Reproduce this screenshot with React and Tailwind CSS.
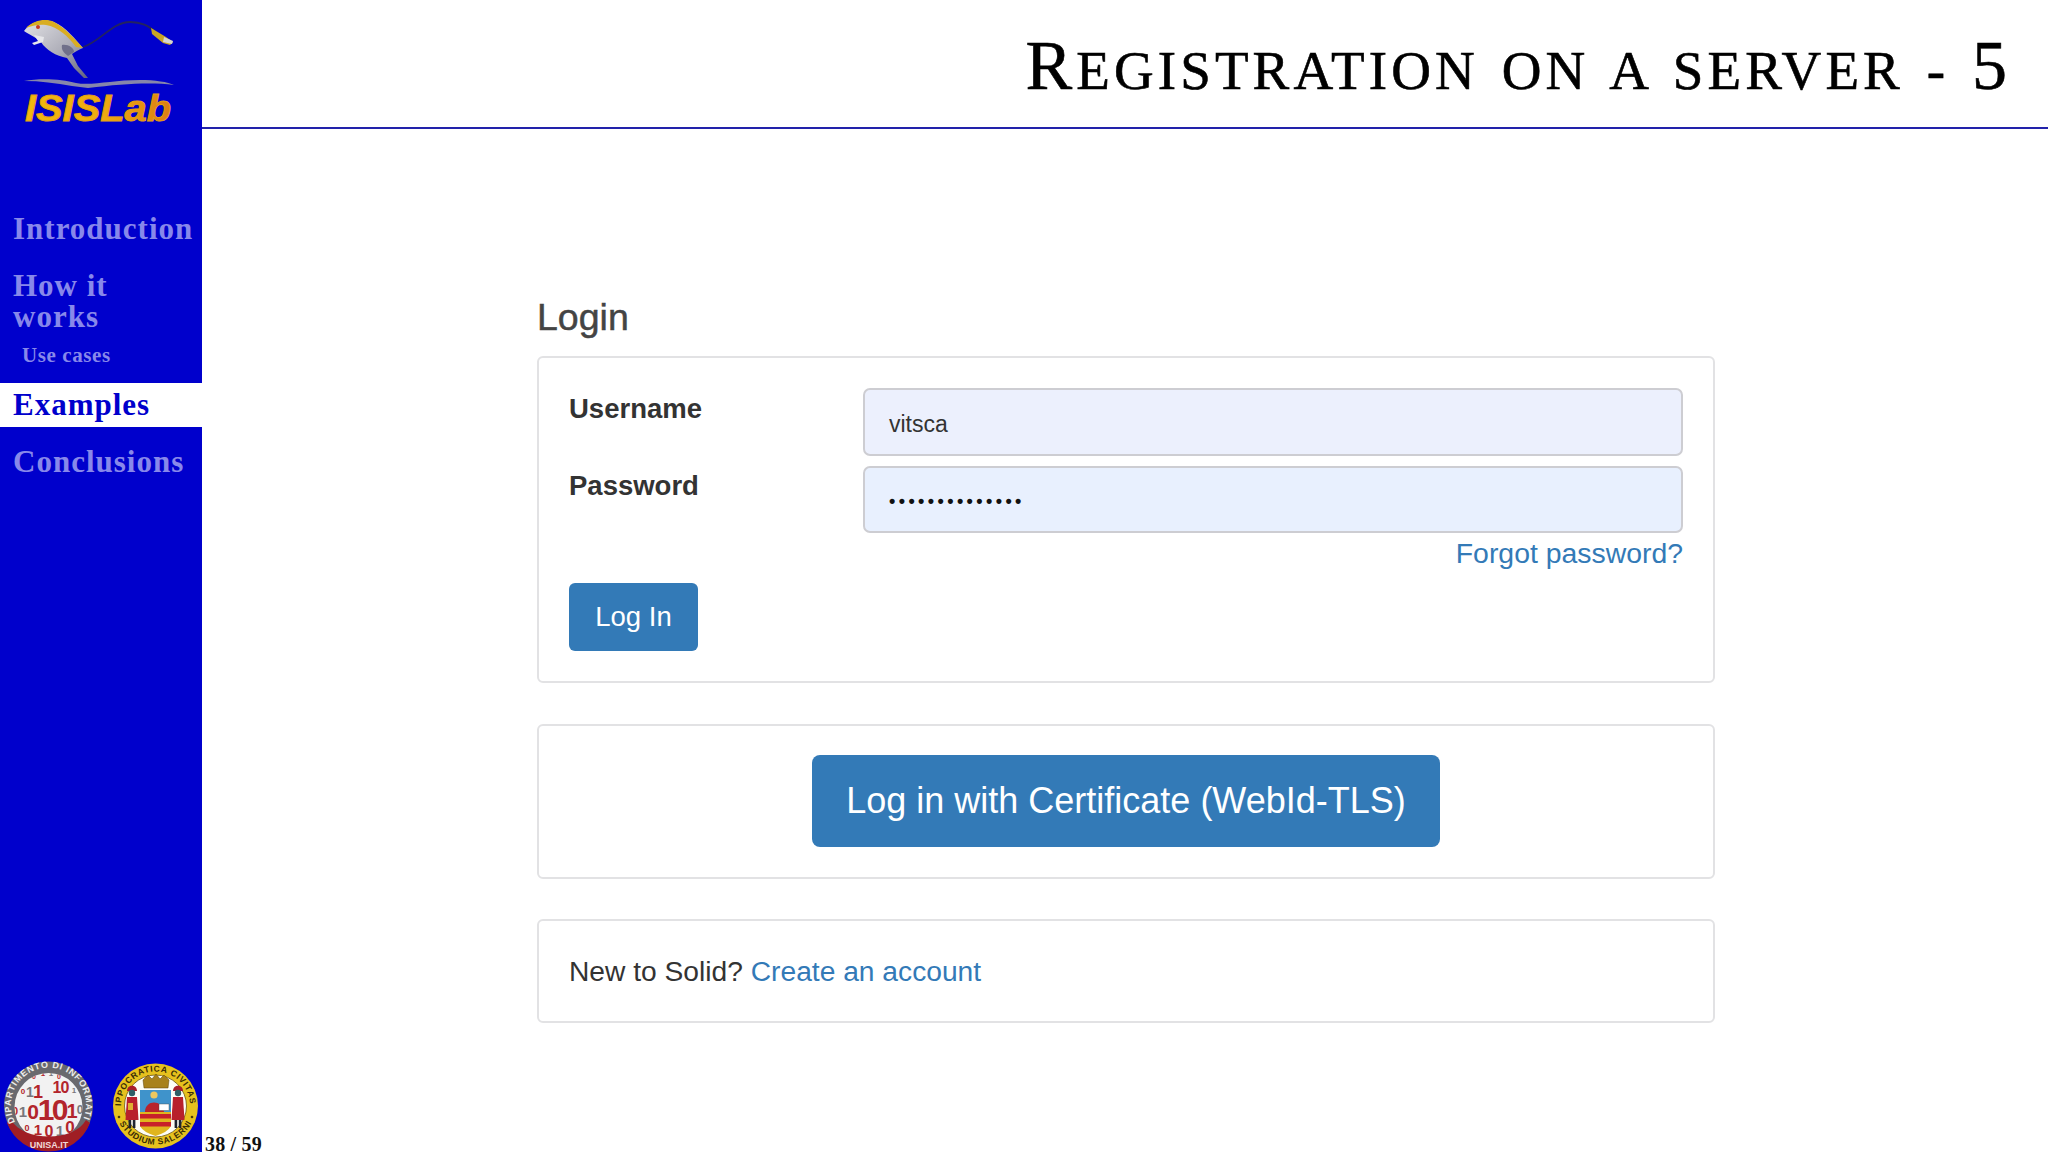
const serif = { fontFamily: '"Liberation Serif", serif' };
const sansName = '"Liberation Sans", Arial, sans-serif';

function Logo() {
  return (
    <svg viewBox="0 0 202 128" className="block w-[202px] h-[128px] shrink-0">
      <defs>
        <linearGradient id="isis" x1="0" y1="0" x2="1" y2="0">
          <stop offset="0" stopColor="#f2b90f" />
          <stop offset="0.55" stopColor="#eeaa10" />
          <stop offset="1" stopColor="#dc7d14" />
        </linearGradient>
        <linearGradient id="body" x1="0" y1="0" x2="1" y2="1">
          <stop offset="0" stopColor="#e2e2e6" />
          <stop offset="0.55" stopColor="#aeaeb8" />
          <stop offset="1" stopColor="#62627e" />
        </linearGradient>
      </defs>
      <path d="M83 47 C100 42 112 22 130 22 C142 22 148 26 155 31" fill="none" stroke="#23235f" strokeWidth="1.8" />
      <path d="M151 28 L166 37 L173 42 L170 45 L163 43 L152 34 Z" fill="#c9a525" />
      <path d="M164 37 L173 41 L172 44 L163 42 Z" fill="#d5d5d5" />
      <path d="M24 31 C30 22 44 18 54 22 C66 27 76 40 83 48 C78 50 75 52 72 54 L78 66 L88 78 L84 78 L74 68 L67 58 C56 56 46 50 41 42 C36 37 30 35 24 31 Z" fill="url(#body)" />
      <path d="M26 28 C34 20 46 18 54 22 C64 27 74 38 83 48 L76 47 C68 36 58 27 46 25 C38 24 32 26 26 28 Z" fill="#d9ad22" />
      <path d="M34 35 L44 37 L43 42 L34 45 L32 43 L38 41 Z" fill="#e6e6ea" />
      <path d="M62 45 C68 44 74 48 74 52 L68 56 C64 53 61 50 62 45 Z" fill="#70708a" />
      <circle cx="38" cy="27" r="2" fill="#c8381e" />
      <path d="M24 81 C40 78 62 79 76 83 C92 86 112 80 140 80 C155 80 168 82 174 85 C150 82 122 84 88 88 L72 86 C56 83 40 81 24 81 Z" fill="#8686aa" />
      <text x="25" y="121" fontFamily={sansName} fontStyle="italic" fontWeight="700" fontSize="36" fill="url(#isis)" stroke="#e6a010" strokeWidth="0.9" textLength="146" lengthAdjust="spacingAndGlyphs">ISISLab</text>
    </svg>
  );
}

const digits = [
  [34, 23, 7, "0", 0], [43, 20, 8, "1", 0], [51, 20, 8, "1", 1], [59, 23, 7, "0", 0],
  [23, 38, 8, "0", 0], [30, 41, 14, "1", 1], [38, 42, 18, "1", 0], [57, 37, 16, "1", 0], [65, 37, 16, "0", 0], [74, 37, 8, "1", 1],
  [15, 59, 11, "0", 0], [23, 61, 15, "1", 1], [33, 63, 21, "0", 0], [46, 64, 30, "1", 0], [60, 64, 30, "0", 0], [72, 62, 20, "1", 0], [80, 58, 12, "0", 1],
  [27, 75, 9, "0", 0], [38, 79, 15, "1", 0], [49, 81, 16, "0", 0], [60, 80, 15, "1", 1], [70, 77, 17, "0", 0],
];

function DeptSeal() {
  return (
    <svg viewBox="0 0 100 96" className="block w-[100px] h-[96px] shrink-0">
      <defs>
        <path id="deptTop" d="M15 66 A37.5 37.5 0 1 1 82 66" />
        <clipPath id="ball"><circle cx="48.5" cy="51" r="34" /></clipPath>
      </defs>
      <circle cx="48.5" cy="50" r="44.5" fill="#69696e" />
      <circle cx="48.5" cy="51" r="34" fill="#f2f2f2" />
      <g clipPath="url(#ball)" fontFamily={sansName} textAnchor="middle">
        {digits.map(([x, y, s, d, g], i) => (
          <text key={i} x={x} y={y} fontSize={s} fill={g ? "#77777c" : "#b3252c"}>{d}</text>
        ))}
      </g>
      <path d="M11 64 C24 86 74 86 86 64 L90 67 A44.5 44.5 0 0 1 7 67 Z" fill="#a01e24" />
      <text fontFamily={sansName} fontSize="9" fill="#ececec">
        <textPath href="#deptTop" textLength="163" lengthAdjust="spacing">DIPARTIMENTO DI INFORMATICA</textPath>
      </text>
      <text x="49" y="92" textAnchor="middle" fontFamily={sansName} fontSize="9" fill="#f1d8d8">UNISA.IT</text>
    </svg>
  );
}

function Saint({ x }) {
  return (
    <g>
      <path d={`M${x - 5} 35 C${x - 5} 28 ${x + 5} 28 ${x + 5} 35 Z`} fill="#a81f2a" />
      <circle cx={x} cy="37" r="3.2" fill="#2f5f66" />
      <path d={`M${x - 5} 41 H${x + 5} L${x + 6.5} 64 H${x - 6.5} Z`} fill="#b8202b" />
      <rect x={x - 3.4} y="64" width="2.6" height="8" fill="#1e2430" />
      <rect x={x + 0.8} y="64" width="2.6" height="8" fill="#1e2430" />
    </g>
  );
}

function UniSeal() {
  return (
    <svg viewBox="-6 0 102 96" className="block w-[102px] h-[96px] shrink-0">
      <defs>
        <path id="uniTop" d="M15 50 A34.5 34.5 0 0 1 84 50" />
        <path id="uniBot" d="M9 54 A41 41 0 0 0 90 54" />
      </defs>
      <circle cx="49.5" cy="50" r="42.5" fill="#e6c11e" />
      <circle cx="49.5" cy="50" r="31" fill="#fdfdf6" stroke="#6b5610" strokeWidth="0.8" />
      <text fontFamily={sansName} fontSize="8.5" fill="#3a2c06">
        <textPath href="#uniTop" textLength="106" lengthAdjust="spacing">IPPOCRATICA CIVITAS</textPath>
      </text>
      <text fontFamily={sansName} fontSize="8.5" fill="#3a2c06">
        <textPath href="#uniBot" startOffset="12%" textLength="88" lengthAdjust="spacing">STUDIUM SALERNI</textPath>
      </text>
      <circle cx="13" cy="61" r="1.3" fill="#4a3a0a" />
      <circle cx="86" cy="61" r="1.3" fill="#4a3a0a" />
      <path d="M37 24 L42 19 L46 23 L50 18 L54 23 L58 19 L63 24 L62 32 L38 32 Z" fill="#a8811a" stroke="#5d4309" strokeWidth="0.5" />
      <path d="M34 34 H65 V70 Q62 76 49.5 80 Q37 76 34 70 Z" fill="#e0b51e" />
      <rect x="34" y="34" width="31" height="22" fill="#3f93cb" />
      <circle cx="48" cy="39" r="3.6" fill="#ecc860" />
      <path d="M39 56 C39 44 56 43 58 56 Z" fill="#b8232b" />
      <rect x="53" y="48" width="10" height="6.5" fill="#fff" stroke="#444" strokeWidth="0.4" />
      <rect x="34" y="58" width="31" height="4.5" fill="#c8202a" />
      <rect x="34" y="66" width="31" height="4.5" fill="#c8202a" />
      <Saint x={26} />
      <Saint x={72} />
      <rect x="22" y="47" width="5" height="7" fill="#e0b030" />
    </svg>
  );
}

function Sidebar() {
  return (
    <aside className="w-[202px] h-[1152px] shrink-0 bg-[#0000cc] flex flex-col font-bold" style={serif}>
      <Logo />
      <nav className="flex flex-col pt-[85px] text-[31px] tracking-[1px] text-[#8888ea]">
        <div className="pl-[13px] leading-[32px]">Introduction</div>
        <div className="pl-[13px] pt-[25px] leading-[31px]">How it<br />works</div>
        <div className="pl-[22px] pt-[11px] pb-[16px] text-[21px] tracking-[0.6px] leading-[24px]">Use cases</div>
        <div className="pl-[13px] h-[44px] flex items-center bg-white text-[#0000cc]">Examples</div>
        <div className="pl-[13px] pt-[19px] leading-[32px]">Conclusions</div>
      </nav>
      <div className="mt-auto flex items-end">
        <DeptSeal />
        <UniSeal />
      </div>
    </aside>
  );
}

const sans = { fontFamily: sansName };
const cardCls = "w-[1178px] bg-white border-2 border-[#e2e2e4] rounded-[6px]";

function LoginCard() {
  return (
    <div className={cardCls + " h-[327px] pl-[30px] pr-[30px] pt-[30px]"}>
      <div className="flex items-start">
        <label className="w-[294px] pt-[1px] text-[27.5px] leading-[40px] font-bold text-[#333]">Username</label>
        <div className="flex-1 h-[68px] pl-[24px] pt-[4px] flex items-center text-[23px] text-[#333] bg-[#ecf0fd] border-2 border-[#cdcdd2] rounded-[7px]">vitsca</div>
      </div>
      <div className="flex items-start mt-[10px]">
        <label className="w-[294px] text-[27.5px] leading-[40px] font-bold text-[#333]">Password</label>
        <div className="flex-1 h-[67px] pl-[24px] pt-[3px] flex items-center text-[18px] tracking-[3.4px] font-bold text-[#111] bg-[#e8f0fe] border-2 border-[#cdcdd2] rounded-[7px]">••••••••••••••</div>
      </div>
      <div className="mt-[3px] text-right text-[28.4px] leading-[34px] text-[#337ab7]">Forgot password?</div>
      <button className="mt-[13px] w-[129px] h-[68px] block bg-[#337ab7] text-white text-[27.5px] rounded-[6px]">Log In</button>
    </div>
  );
}

export default function App() {
  return (
    <div className="w-[2048px] h-[1152px] flex bg-white overflow-hidden" style={sans}>
      <Sidebar />
      <main className="flex-1 flex flex-col min-w-0">
        <header className="h-[129px] shrink-0 border-b-2 border-[#2222aa] flex justify-end items-start pr-[41px] pt-[24px] text-black" style={serif}>
          <h1 className="font-normal leading-[84px] whitespace-nowrap tracking-[4.1px] [word-spacing:5px] [-webkit-text-stroke:0.6px_#000]">
            <span className="text-[70px]">R</span>
            <span className="text-[55px] uppercase">egistration on a server - </span>
            <span className="text-[70px] tracking-normal">5</span>
          </h1>
        </header>
        <section className="pl-[335px] pt-[166px] flex flex-col">
          <h2 className="text-[37.5px] leading-[44px] font-normal text-[#444] [-webkit-text-stroke:0.5px_#444] mb-[17px]">Login</h2>
          <LoginCard />
          <div className={cardCls + " mt-[41px] h-[155px] flex items-center justify-center pb-[2px]"}>
            <button className="w-[628px] h-[92px] bg-[#337ab7] text-white text-[36px] rounded-[8px]">Log in with Certificate (WebId-TLS)</button>
          </div>
          <div className={cardCls + " mt-[40px] h-[104px] pl-[30px] flex items-center text-[28.2px] text-[#333]"}>
            <span>New to Solid? <a className="text-[#337ab7]">Create an account</a></span>
          </div>
        </section>
        <div className="mt-auto pl-[3px] text-[20px] leading-[16px] tracking-[0.2px] font-bold text-[#111]" style={serif}>38 / 59</div>
      </main>
    </div>
  );
}
